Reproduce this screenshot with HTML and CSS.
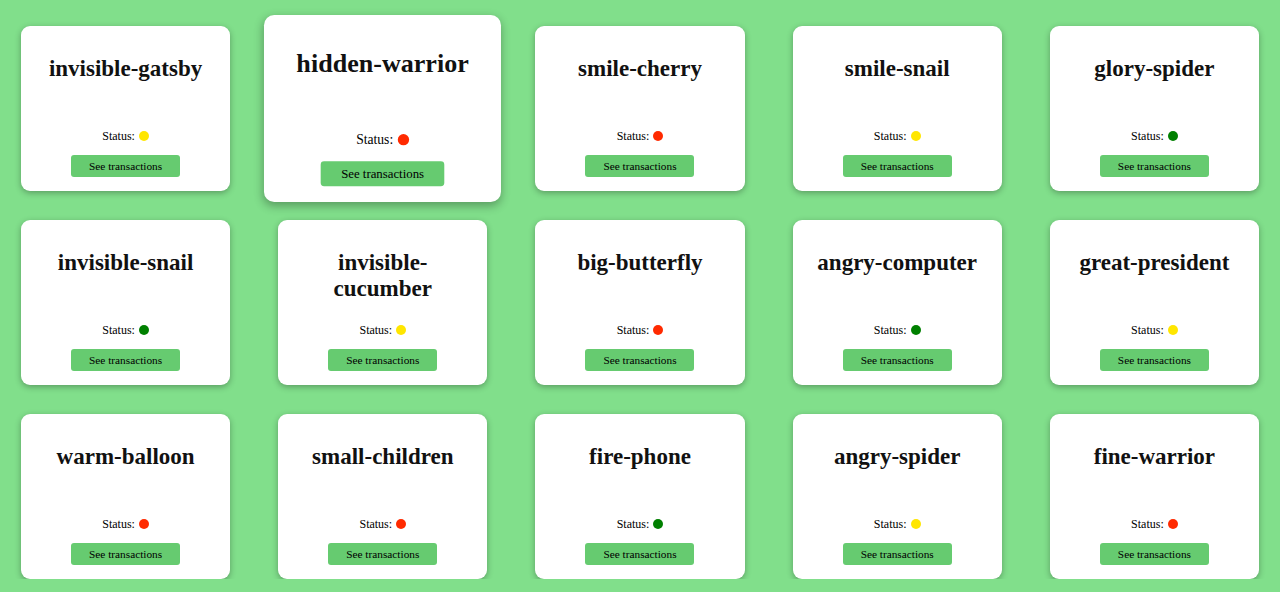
FILE: index.html
```html
<!DOCTYPE html>
<html>
<head>
<meta charset="utf-8">
<link rel="stylesheet" href="styles.css">
</head>
<body>
<main class="grid">
  <div class="card"><h2 class="name">invisible-gatsby</h2><div class="status">Status: <span class="dot yellow"></span></div><button class="btn">See transactions</button></div>
  <div class="card hover"><h2 class="name">hidden-warrior</h2><div class="status">Status: <span class="dot red"></span></div><button class="btn">See transactions</button></div>
  <div class="card"><h2 class="name">smile-cherry</h2><div class="status">Status: <span class="dot red"></span></div><button class="btn">See transactions</button></div>
  <div class="card"><h2 class="name">smile-snail</h2><div class="status">Status: <span class="dot yellow"></span></div><button class="btn">See transactions</button></div>
  <div class="card"><h2 class="name">glory-spider</h2><div class="status">Status: <span class="dot green"></span></div><button class="btn">See transactions</button></div>

  <div class="card"><h2 class="name">invisible-snail</h2><div class="status">Status: <span class="dot green"></span></div><button class="btn">See transactions</button></div>
  <div class="card"><h2 class="name">invisible-cucumber</h2><div class="status">Status: <span class="dot yellow"></span></div><button class="btn">See transactions</button></div>
  <div class="card"><h2 class="name">big-butterfly</h2><div class="status">Status: <span class="dot red"></span></div><button class="btn">See transactions</button></div>
  <div class="card"><h2 class="name">angry-computer</h2><div class="status">Status: <span class="dot green"></span></div><button class="btn">See transactions</button></div>
  <div class="card"><h2 class="name">great-president</h2><div class="status">Status: <span class="dot yellow"></span></div><button class="btn">See transactions</button></div>

  <div class="card"><h2 class="name">warm-balloon</h2><div class="status">Status: <span class="dot red"></span></div><button class="btn">See transactions</button></div>
  <div class="card"><h2 class="name">small-children</h2><div class="status">Status: <span class="dot red"></span></div><button class="btn">See transactions</button></div>
  <div class="card"><h2 class="name">fire-phone</h2><div class="status">Status: <span class="dot green"></span></div><button class="btn">See transactions</button></div>
  <div class="card"><h2 class="name">angry-spider</h2><div class="status">Status: <span class="dot yellow"></span></div><button class="btn">See transactions</button></div>
  <div class="card"><h2 class="name">fine-warrior</h2><div class="status">Status: <span class="dot red"></span></div><button class="btn">See transactions</button></div>
</main>
</body>
</html>
```

FILE: styles.css
```css
html, body {
  margin: 0;
  padding: 0;
  background: #81df8b;
  font-family: "Liberation Serif", "Times New Roman", serif;
  color: #000;
}

.grid {
  display: grid;
  grid-template-columns: repeat(5, 1fr);
  column-gap: 48px;
  row-gap: 29px;
  padding: 26px 21px 0 21px;
}

.card {
  height: 165px;
  box-sizing: border-box;
  background: #fff;
  border-radius: 9px;
  box-shadow: 0 2px 6px rgba(0, 0, 0, 0.3);
  padding: 30px 16px 14px;
  display: flex;
  flex-direction: column;
  align-items: center;
  text-align: center;
}

.card.hover {
  transform: scale(1.134);
  box-shadow: 0 3px 8px rgba(0, 0, 0, 0.3);
}

.name {
  margin: 0;
  font-size: 23px;
  line-height: 26px;
  font-weight: bold;
  color: #111;
}

.status {
  margin-top: auto;
  font-size: 12px;
  line-height: 16px;
  height: 16px;
  margin-bottom: 11px;
  display: flex;
  align-items: center;
  gap: 4px;
}

.dot {
  display: inline-block;
  width: 10px;
  height: 10px;
  border-radius: 50%;
  margin-top: -1px;
}

.dot.yellow { background: #ffe600; }
.dot.red { background: #ff2a00; }
.dot.green { background: #008000; }

.btn {
  width: 109px;
  height: 22px;
  border: none;
  border-radius: 3px;
  background: #66cb70;
  font-family: "Liberation Serif", "Times New Roman", serif;
  font-size: 11.3px;
  color: #000;
  padding: 0;
}
```
